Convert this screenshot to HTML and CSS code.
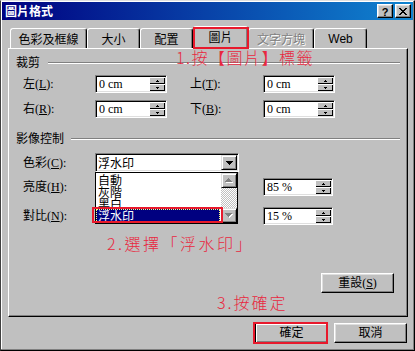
FILE: index.html
```html
<!DOCTYPE html>
<html lang="zh-Hant">
<head>
<meta charset="utf-8">
<title>圖片格式</title>
<link rel="stylesheet" href="styles.css">
</head>
<body>
<div class="window">
  <div class="titlebar">
    <span class="title">圖片格式</span>
    <div class="tb-buttons">
      <span class="tb-btn help">?</span>
      <span class="tb-btn close"><svg width="8" height="7" viewBox="0 0 8 7" shape-rendering="crispEdges"><path d="M0 0h2v1H0zM6 0h2v1H6zM1 1h2v1H1zM5 1h2v1H5zM2 2h4v1H2zM3 3h2v1H3zM2 4h4v1H2zM1 5h2v1H1zM5 5h2v1H5zM0 6h2v1H0zM6 6h2v1H6z" fill="#000"/></svg></span>
    </div>
  </div>

  <div class="tabs">
    <div class="tab w1">色彩及框線</div>
    <div class="tab w2">大小</div>
    <div class="tab w3">配置</div>
    <div class="tab sel">圖片</div>
    <div class="tab w5 disabled">文字方塊</div>
    <div class="tab w6 sans">Web</div>
  </div>

  <div class="panel">
    <div class="ghead"><span>裁剪</span><i></i></div>
    <div class="row r1">
      <span class="lbl">左(<u>L</u>):</span>
      <span class="field">0 cm<span class="spin"><span class="sb"><svg width="3" height="2" viewBox="0 0 3 2" shape-rendering="crispEdges"><path d="M1 0h1v1h1v1H0V1h1z"/></svg></span><span class="sb"><svg width="3" height="2" viewBox="0 0 3 2" shape-rendering="crispEdges"><path d="M0 0h3v1H2v1H1V1H0z"/></svg></span></span></span>
      <span class="lbl c4">上(<u>T</u>):</span>
      <span class="field c5">0 cm<span class="spin"><span class="sb"><svg width="3" height="2" viewBox="0 0 3 2" shape-rendering="crispEdges"><path d="M1 0h1v1h1v1H0V1h1z"/></svg></span><span class="sb"><svg width="3" height="2" viewBox="0 0 3 2" shape-rendering="crispEdges"><path d="M0 0h3v1H2v1H1V1H0z"/></svg></span></span></span>
    </div>
    <div class="row r2">
      <span class="lbl">右(<u>R</u>):</span>
      <span class="field">0 cm<span class="spin"><span class="sb"><svg width="3" height="2" viewBox="0 0 3 2" shape-rendering="crispEdges"><path d="M1 0h1v1h1v1H0V1h1z"/></svg></span><span class="sb"><svg width="3" height="2" viewBox="0 0 3 2" shape-rendering="crispEdges"><path d="M0 0h3v1H2v1H1V1H0z"/></svg></span></span></span>
      <span class="lbl c4">下(<u>B</u>):</span>
      <span class="field c5">0 cm<span class="spin"><span class="sb"><svg width="3" height="2" viewBox="0 0 3 2" shape-rendering="crispEdges"><path d="M1 0h1v1h1v1H0V1h1z"/></svg></span><span class="sb"><svg width="3" height="2" viewBox="0 0 3 2" shape-rendering="crispEdges"><path d="M0 0h3v1H2v1H1V1H0z"/></svg></span></span></span>
    </div>

    <div class="ghead g2"><span>影像控制</span><i></i></div>
    <div class="row r3">
      <span class="lbl">色彩(<u>C</u>):</span>
      <div class="combo">
        <span class="combo-text">浮水印</span>
        <span class="combo-btn"><svg width="7" height="4" viewBox="0 0 7 4" shape-rendering="crispEdges"><path d="M0 0h7v1H6v1H5v1H4v1H3V3H2V2H1V1H0z"/></svg></span>
        <div class="dropdown">
          <div class="items">
            <div class="item">自動</div>
            <div class="item">灰階</div>
            <div class="item cut">黑白</div>
            <div class="item chosen">浮水印</div>
          </div>
          <div class="sbar">
            <span class="sbtn"><svg width="8" height="5" viewBox="0 0 8 5" shape-rendering="crispEdges"><path d="M4 1h1v1h1v1h1v1h1v1H1V4h1V3h1V2h1z" fill="#fff"/><path d="M3 0h1v1h1v1h1v1h1v1H0V3h1V2h1V1h1z" fill="#808080"/></svg></span>
            <span class="track"></span>
            <span class="sbtn"><svg width="8" height="5" viewBox="0 0 8 5" shape-rendering="crispEdges"><path d="M1 1h7v1H7v1H6v1H5v1H4V4H3V3H2V2H1z" fill="#fff"/><path d="M0 0h7v1H6v1H5v1H4v1H3V3H2V2H1V1H0z" fill="#808080"/></svg></span>
          </div>
        </div>
      </div>
    </div>
    <div class="row r4">
      <span class="lbl">亮度(<u>H</u>):</span>
      <span class="field narrow c5">85 %<span class="spin"><span class="sb"><svg width="3" height="2" viewBox="0 0 3 2" shape-rendering="crispEdges"><path d="M1 0h1v1h1v1H0V1h1z"/></svg></span><span class="sb"><svg width="3" height="2" viewBox="0 0 3 2" shape-rendering="crispEdges"><path d="M0 0h3v1H2v1H1V1H0z"/></svg></span></span></span>
    </div>
    <div class="row r5">
      <span class="lbl">對比(<u>N</u>):</span>
      <span class="field narrow c5">15 %<span class="spin"><span class="sb"><svg width="3" height="2" viewBox="0 0 3 2" shape-rendering="crispEdges"><path d="M1 0h1v1h1v1H0V1h1z"/></svg></span><span class="sb"><svg width="3" height="2" viewBox="0 0 3 2" shape-rendering="crispEdges"><path d="M0 0h3v1H2v1H1V1H0z"/></svg></span></span></span>
    </div>

    <button class="btn reset">重設(<u>S</u>)</button>
  </div>

  <div class="actions">
    <button class="btn default">確定</button>
    <button class="btn">取消</button>
  </div>
</div>

<div class="mark m1"></div>
<div class="mark m2"></div>
<div class="mark m3"></div>
<div class="note n1">1.按【圖片】標籤</div>
<div class="note n2">2.選擇「浮水印」</div>
<div class="note n3">3.按確定</div>
</body>
</html>
```

FILE: styles.css
```css
* { box-sizing: border-box; margin: 0; padding: 0; }
html, body { width: 415px; height: 351px; overflow: hidden; }
body {
  position: relative;
  background: #c0c0c0;
  font: 12px/14px "Liberation Serif", "Noto Sans CJK TC", serif;
  color: #000;
}

.window {
  width: 415px;
  height: 351px;
  border: 1px solid;
  border-color: #dfdfdf #000 #000 #404040;
  padding: 1px;
  box-shadow: inset -1px -1px #808080, inset 1px 1px #fff;
  display: flex;
  flex-direction: column;
}

/* title bar */
.titlebar {
  height: 18px;
  display: flex;
  align-items: center;
  justify-content: space-between;
  padding: 0 2px 0 3px;
  background: linear-gradient(90deg, #000080, #1084d0);
}
.title {
  color: #fff;
  font-weight: bold;
  font-family: "Noto Sans CJK TC", sans-serif;
  font-size: 12px;
  line-height: 14px;
}
.tb-buttons { display: flex; gap: 2px; }
.tb-btn {
  width: 16px;
  height: 14px;
  background: #c0c0c0;
  border: 1px solid;
  border-color: #fff #000 #000 #fff;
  box-shadow: inset -1px -1px #808080, inset 1px 1px #dfdfdf;
  display: flex;
  align-items: center;
  justify-content: center;
}
.help {
  font: bold 11px/12px "Liberation Sans", sans-serif;
  padding-top: 1px;
}

/* tabs */
.tabs {
  display: flex;
  align-items: flex-end;
  height: 22px;
  margin-top: 6px;
  padding-left: 8px;
}
.tab {
  height: 20px;
  border: 1px solid;
  border-bottom: none;
  border-color: #fff #000 transparent #fff;
  border-radius: 3px 3px 0 0;
  box-shadow: inset -1px 0 #808080;
  display: flex;
  align-items: center;
  justify-content: center;
  font-family: "Noto Sans CJK TC", sans-serif;
  padding-top: 1px;
}
.w1 { width: 77px; }
.w2 { width: 53px; }
.w3 { width: 53px; }
.w5 { width: 66px; }
.w6 { width: 53px; }
.sel {
  width: 55px;
  height: 23px;
  margin-bottom: -1px;
  position: relative;
  z-index: 1;
  background: #c0c0c0;
  padding-top: 0;
  padding-bottom: 2px;
}
.disabled { color: #808080; text-shadow: 1px 1px #fff; }
.sans { font-family: "Liberation Sans", sans-serif; }

/* panel */
.panel {
  width: 400px;
  height: 269px;
  margin-left: 6px;
  border: 1px solid;
  border-color: #fff #000 #000 #fff;
  box-shadow: inset -1px -1px #808080;
  padding: 6px 7px 0 7px;
  display: flex;
  flex-direction: column;
}
.ghead {
  display: flex;
  align-items: center;
  height: 14px;
  gap: 8px;
  font-family: "Noto Sans CJK TC", sans-serif;
}
.ghead i {
  flex: 1;
  height: 2px;
  margin-top: 1px;
  border-top: 1px solid #808080;
  border-bottom: 1px solid #fff;
}
.g2 { margin-top: 13px; gap: 7px; }

.row {
  display: grid;
  grid-template-columns: 72px 72px 23px 73px 72px;
  align-items: center;
  height: 18px;
  padding-left: 7px;
}
.r1 { margin-top: 6px; }
.r2 { margin-top: 7px; }
.r3 { margin-top: 8px; height: 19px; }
.r4 { margin-top: 6px; }
.r5 { margin-top: 11px; }
.c4 { grid-column: 4; }
.c5 { grid-column: 5; }
.lbl { white-space: nowrap; }

.field {
  width: 72px;
  height: 18px;
  background: #fff;
  border: 1px solid;
  border-color: #808080 #fff #fff #808080;
  box-shadow: inset 1px 1px #000, inset -1px -1px #dfdfdf;
  display: flex;
  align-items: center;
  padding-left: 3px;
  white-space: nowrap;
}
.field.narrow { width: 70px; }
.spin {
  margin-left: auto;
  margin-right: 1px;
  width: 16px;
  height: 14px;
  display: flex;
  flex-direction: column;
}
.sb {
  flex: 1;
  background: #c0c0c0;
  box-shadow: inset 1px 1px #fff, inset -1px -1px #000;
  display: flex;
  align-items: center;
  justify-content: center;
}
.sb svg { display: block; }

/* combo */
.combo {
  position: relative;
  grid-column: 2 / 5;
  width: 144px;
  height: 19px;
  background: #fff;
  border: 1px solid;
  border-color: #808080 #fff #fff #808080;
  box-shadow: inset 1px 1px #000, inset -1px -1px #dfdfdf;
  display: flex;
  align-items: center;
  padding-left: 2px;
  font-family: "Noto Sans CJK TC", sans-serif;
}
.combo-btn {
  margin-left: auto;
  margin-right: 1px;
  width: 16px;
  height: 15px;
  background: #c0c0c0;
  border: 1px solid;
  border-color: #dfdfdf #000 #000 #dfdfdf;
  box-shadow: inset 1px 1px #fff, inset -1px -1px #808080;
  display: flex;
  align-items: center;
  justify-content: center;
}
.dropdown {
  position: absolute;
  left: -1px;
  top: 18px;
  width: 143px;
  height: 52px;
  border: 1px solid #000;
  background: #fff;
  display: flex;
  z-index: 2;
}
.items { flex: 1; display: flex; flex-direction: column; padding-top: 1px; }
.item {
  height: 12px;
  line-height: 12px;
  padding-left: 2px;
  overflow: hidden;
}
.item.cut { height: 11px; }
.item.chosen {
  height: 14px;
  line-height: 13px;
  background: #000080;
  color: #fff;
  outline: 1px dotted #ffff80;
  outline-offset: -1px;
  margin-right: 1px;
}
.sbar { width: 16px; display: flex; flex-direction: column; }
.sbtn {
  height: 15px;
  background: #c0c0c0;
  border: 1px solid;
  border-color: #dfdfdf #000 #000 #dfdfdf;
  box-shadow: inset 1px 1px #fff, inset -1px -1px #808080;
  display: flex;
  align-items: center;
  justify-content: center;
}
.track {
  flex: 1;
  background: repeating-conic-gradient(#fff 0 25%, #c0c0c0 0 50%) 0 0 / 2px 2px;
}

/* buttons */
.btn {
  width: 73px;
  height: 20px;
  background: #c0c0c0;
  border: 1px solid;
  border-color: #fff #000 #000 #fff;
  box-shadow: inset -1px -1px #808080, inset 1px 1px #dfdfdf;
  font: 12px/14px "Liberation Serif", "Noto Sans CJK TC", serif;
  color: #000;
  display: flex;
  align-items: center;
  justify-content: center;
}
.reset { align-self: flex-end; margin-top: 48px; margin-right: 6px; }
.actions {
  display: flex;
  justify-content: flex-end;
  gap: 6px;
  margin-top: 6px;
  padding-right: 6px;
}
.btn.default {
  border-color: #000;
  box-shadow: inset 1px 1px #fff, inset -1px -1px #808080;
}

/* annotations */
.mark {
  position: absolute;
  border: 2px solid #e8192c;
  z-index: 5;
}
.m1 { left: 193px; top: 27px; width: 56px; height: 22px; }
.m2 { left: 92px; top: 207px; width: 131px; height: 16px; }
.m3 { left: 253px; top: 322px; width: 75px; height: 22px; }

.note {
  position: absolute;
  font: 300 16px/16px "Noto Sans CJK TC", sans-serif;
  color: #e8283f;
  letter-spacing: 2px;
  white-space: nowrap;
  z-index: 5;
}
.n1 { left: 176px; top: 49px; letter-spacing: 1.5px; }
.n2 { left: 107px; top: 235px; letter-spacing: 2.5px; }
.n3 { left: 217px; top: 294px; }
```
